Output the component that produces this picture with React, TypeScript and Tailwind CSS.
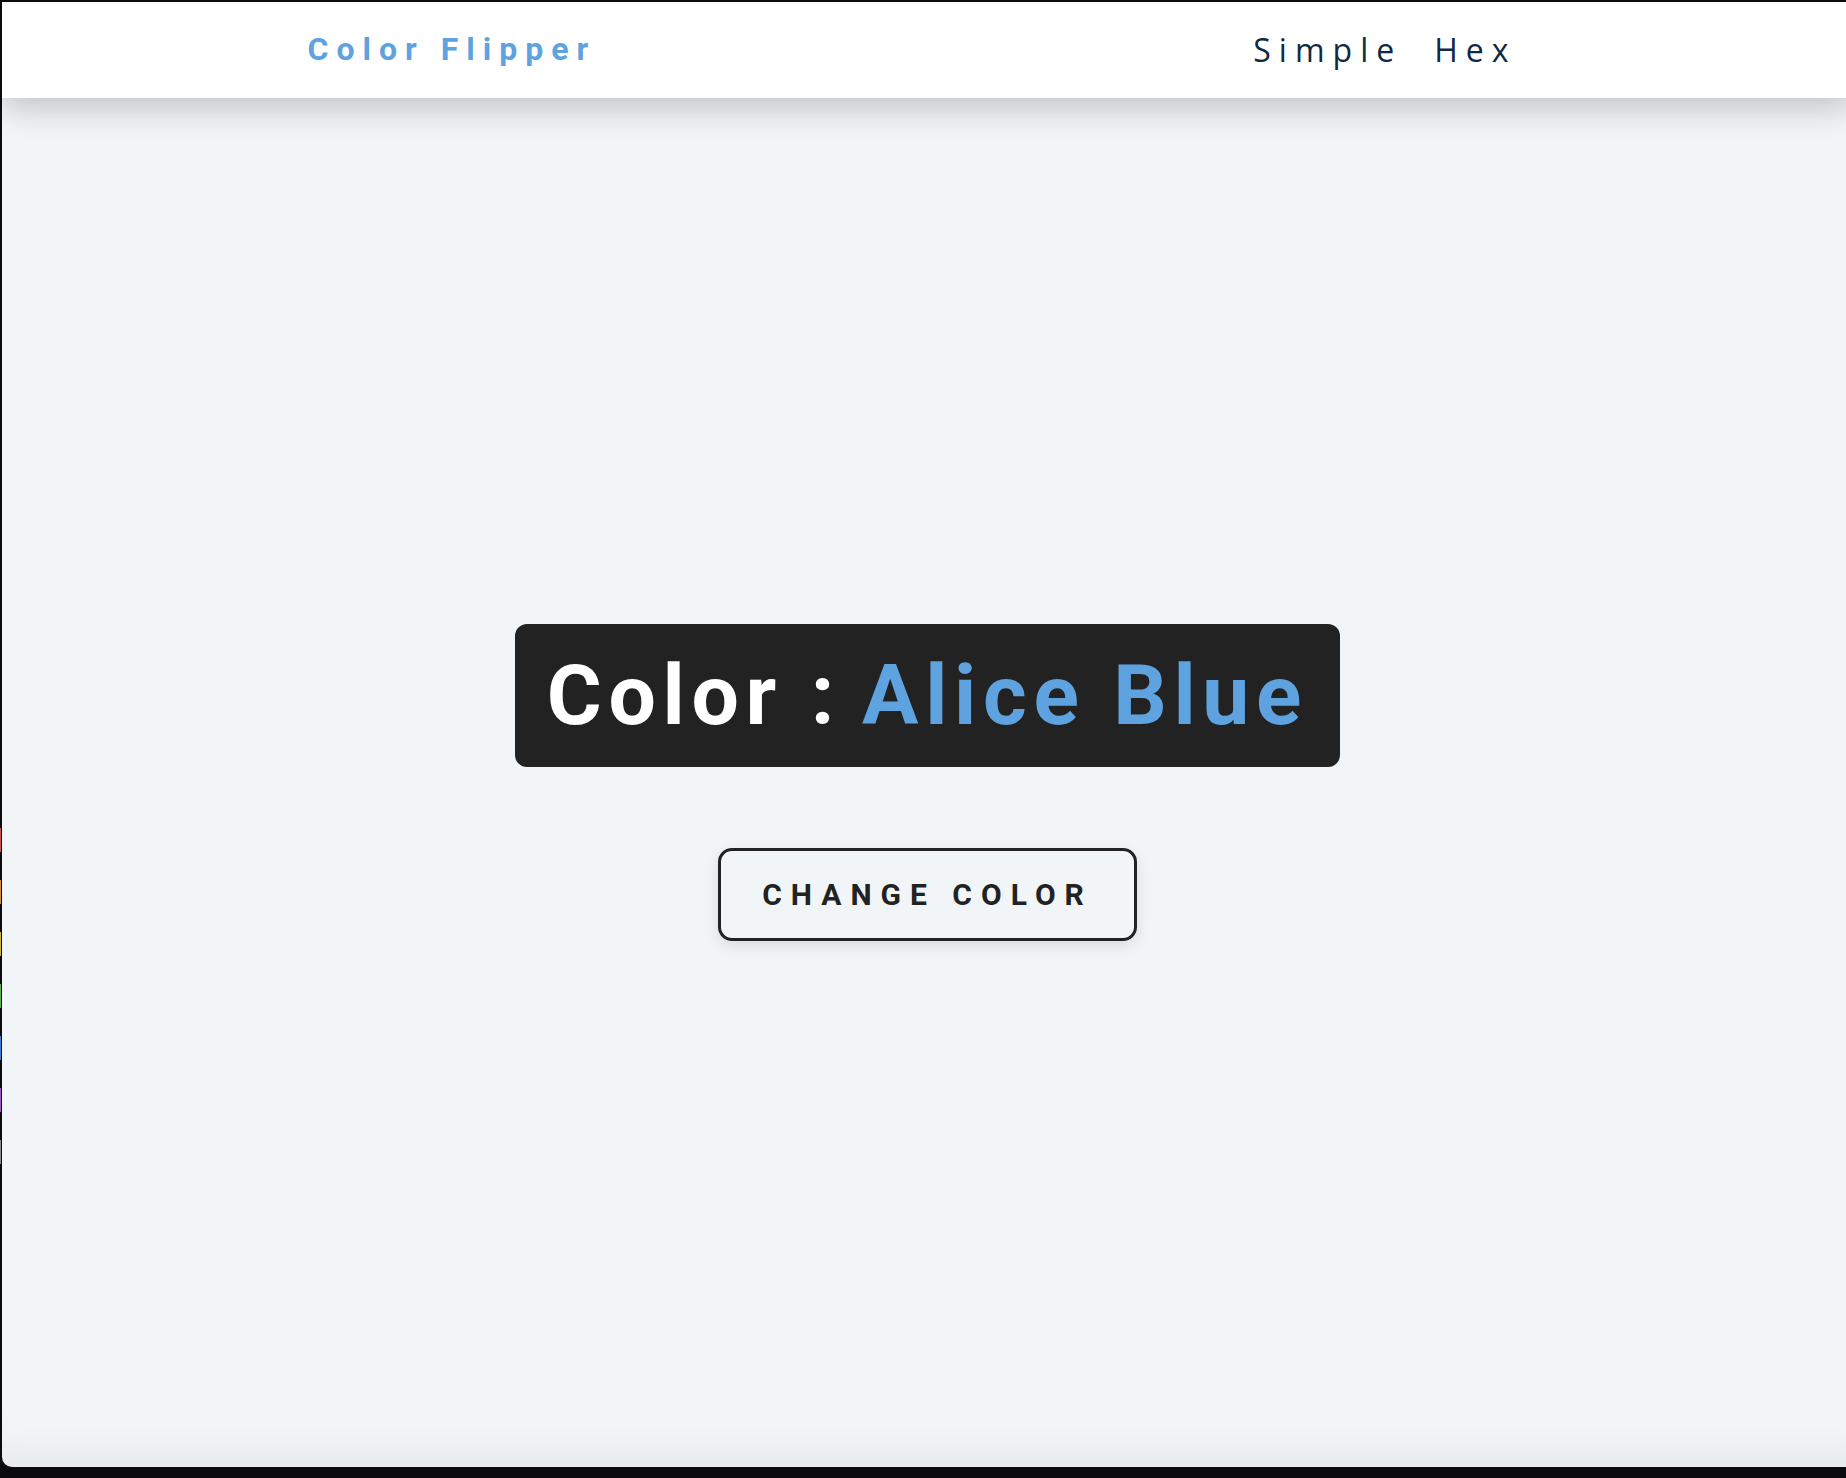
const tags = ['#c9544c', '#d38d3c', '#cbb63c', '#5cae50', '#3d80d0', '#9c5ac6', '#8a8a8a'];

export default function App() {
  return (
    <div className="flex h-[1478px] w-full overflow-hidden bg-[#0b0b0f] pt-[2px] pb-[11px]">
      {/* window edge with finder tags */}
      <div className="flex w-[2px] shrink-0 flex-col gap-[28px] pt-[826px]">
        {tags.map((c) => (
          <div key={c} className="h-[24px] w-[1px]" style={{ background: c }} />
        ))}
      </div>

      <div className="relative flex h-full w-[1851px] shrink-0 flex-col overflow-hidden rounded-bl-[10px] bg-[#f1f5f8] shadow-[inset_0_-40px_40px_-30px_rgba(0,0,0,0.06)]">
        <nav className="relative z-10 flex h-[96px] shrink-0 items-center bg-white shadow-[0_10px_30px_rgba(0,0,0,0.2)]">
          <div className="mx-auto flex w-[1240px] items-center justify-between">
            <h4 className="-mt-[3px] font-['Roboto',sans-serif] text-[32px] leading-none font-bold tracking-[8px] text-[#5ea3e0]">
              Color Flipper
            </h4>
            <ul className="mr-[31px] flex gap-[32px] font-['Open_Sans',sans-serif] text-[32px] leading-none font-medium tracking-[8px] text-[#102a42]">
              <li>
                <a href="#">Simple</a>
              </li>
              <li>
                <a href="#">Hex</a>
              </li>
            </ul>
          </div>
        </nav>

        <main className="flex flex-1 flex-col items-center justify-center">
          <h2 className="flex h-[143px] items-center rounded-[12px] bg-[#222222] px-[32px] font-['Roboto',sans-serif] text-[84px] leading-none font-bold tracking-[6.7px] text-white">
            Color : <span className="ml-[0.25em] text-[#5ea3e0]">Alice Blue</span>
          </h2>
          <button className="mt-[81px] h-[93px] w-[419px] rounded-[14px] border-[3px] border-[#222222] bg-transparent font-['Roboto',sans-serif] text-[30px] font-bold tracking-[9px] text-[#222222] uppercase shadow-[0_5px_15px_rgba(0,0,0,0.1)]">
            change color
          </button>
        </main>
      </div>
    </div>
  );
}
